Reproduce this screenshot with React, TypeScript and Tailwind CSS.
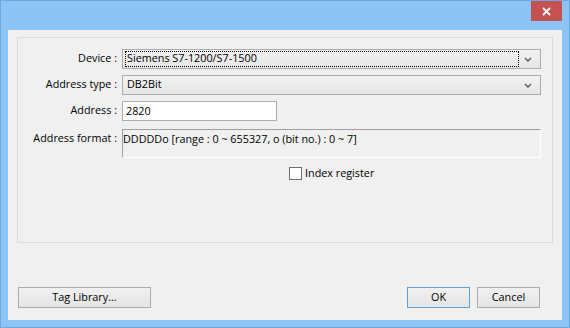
import React from 'react';

const font = "font-['Open_Sans','Noto_Sans',sans-serif] text-[10.8px] text-black";

const Chevron: React.FC = () => (
    <svg width="8" height="5" viewBox="0 0 8 5" className="shrink-0">
        <path d="M1 1 L4 4 L7 1" fill="none" stroke="#555" strokeWidth="1.4" />
    </svg>
);

const Combo: React.FC<{ value: string; focused?: boolean }> = ({ value, focused }) => (
    <div className="w-[419px] h-[20px] border border-[#acacac] bg-gradient-to-b from-[#f2f2f2] to-[#e6e6e6] flex items-center pl-[2px] pr-[3px]">
        <div className={`flex-1 h-[16px] flex items-center pl-[1px] pb-[1px] ${focused ? 'border border-dotted border-black' : 'border border-transparent'}`}>
            {value}
        </div>
        <div className="w-[18px] flex justify-center">
            <Chevron />
        </div>
    </div>
);

const Label: React.FC<{ text: string }> = ({ text }) => (
    <div className="w-[99px] text-right pb-[2px] whitespace-nowrap">{text}</div>
);

const WinButton: React.FC<{ label: string; width: string; isDefault?: boolean }> = ({ label, width, isDefault }) => (
    <div className={`${width} h-[21px] flex items-center justify-center border bg-gradient-to-b from-[#f0f0f0] to-[#e5e5e5] ${isDefault ? 'border-[#5fa0d6]' : 'border-[#acacac]'}`}>
        {label}
    </div>
);

export default function App() {
    return (
        <div className={`w-[570px] h-[328px] bg-[#8cc4f5] border border-[#6ba9e3] flex flex-col ${font}`}>
            <div className="h-[29px] flex justify-end items-start">
                <div className="mr-[7px] w-[31px] h-[20px] bg-[#c75050] flex items-center justify-center">
                    <svg width="9" height="9" viewBox="0 0 9 9">
                        <path d="M1 1 L8 8 M8 1 L1 8" stroke="#fff" strokeWidth="1.8" />
                    </svg>
                </div>
            </div>
            <div className="flex-1 mx-[7px] mb-[7px] bg-[#f0f0f0] flex flex-col">
                <div className="mt-[7px] mx-[9px] h-[206px] border border-[#dcdcdc] pt-[11px] flex flex-col">
                    <div className="flex items-center gap-[5px]">
                        <Label text="Device :" />
                        <Combo value="Siemens S7-1200/S7-1500" focused />
                    </div>
                    <div className="flex items-center gap-[5px] mt-[6px]">
                        <Label text="Address type :" />
                        <Combo value="DB2Bit" />
                    </div>
                    <div className="flex items-center gap-[5px] mt-[6px]">
                        <Label text="Address :" />
                        <div className="w-[155px] h-[20px] border border-[#abadb3] bg-white flex items-center pl-[3px]">2820</div>
                    </div>
                    <div className="flex items-start gap-[5px] mt-[8px]">
                        <div className="pt-[1px]"><Label text="Address format :" /></div>
                        <div className="w-[419px] h-[29px] border-t border-l border-t-[#a0a0a0] border-l-[#a0a0a0] border-r border-b border-r-white border-b-white pt-[1px] whitespace-nowrap">
                            DDDDDo [range : 0 ~ 655327, o (bit no.) : 0 ~ 7]
                        </div>
                    </div>
                    <div className="flex items-center mt-[7px] ml-[271px] gap-[3px]">
                        <div className="w-[13px] h-[13px] border border-[#707070] bg-white" />
                        <span>Index register</span>
                    </div>
                </div>
                <div className="flex-1" />
                <div className="flex items-center pl-[10px] pr-[22px] mb-[12px]">
                    <WinButton label="Tag Library..." width="w-[133px]" />
                    <div className="flex-1" />
                    <div className="flex gap-[7px]">
                        <WinButton label="OK" width="w-[63px]" isDefault />
                        <WinButton label="Cancel" width="w-[63px]" />
                    </div>
                </div>
            </div>
        </div>
    );
}
